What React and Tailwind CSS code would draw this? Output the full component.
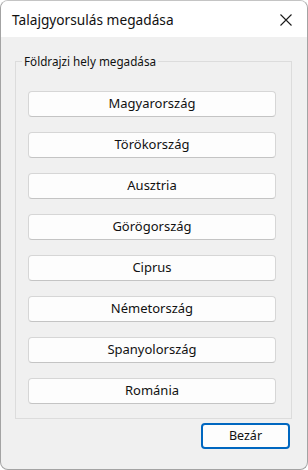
import React from "react";

const countries = [
  "Magyarország",
  "Törökország",
  "Ausztria",
  "Görögország",
  "Ciprus",
  "Németország",
  "Spanyolország",
  "Románia",
];

export default function App() {
  return (
    <div className="w-[308px] h-[470px] bg-white" style={{ fontFamily: '"Noto Sans", "Open Sans", sans-serif' }}>
      <div className="w-full h-full rounded-[8px] border border-[#a3a3a3] border-t-[#c4c4c4] bg-[#f0f0f0] overflow-hidden flex flex-col">
        <div className="h-[36px] bg-white flex items-center justify-between pl-[11px] pr-[15px] shrink-0">
          <span className="text-[13.7px] text-[#111] leading-none mt-[2px]">Talajgyorsulás megadása</span>
          <svg width="12" height="12" viewBox="0 0 12 12" className="mt-[2px]">
            <path d="M0.5 0.5 L11.5 11.5 M11.5 0.5 L0.5 11.5" stroke="#1b1b1b" strokeWidth="1.1" />
          </svg>
        </div>
        <div className="flex-1 flex flex-col">
          <fieldset className="mt-[16px] ml-[14px] w-[277px] border border-[#dcdcdc] pb-[14px]">
            <legend className="ml-[6px] px-[2px] text-[11.7px] leading-[16px] text-[#111]">Földrajzi hely megadása</legend>
            <div className="flex flex-col gap-[15px] pt-[22px] pl-[12px]">
              {countries.map((c) => (
                <button
                  key={c}
                  className="w-[248px] h-[26px] rounded-[4px] bg-[#fdfdfd] border border-[#d6d6d6] border-b-[#c4c4c4] text-[13px] text-[#111] flex items-center justify-center"
                >
                  {c}
                </button>
              ))}
            </div>
          </fieldset>
          <div className="flex justify-end pr-[17px] pt-[4px]">
            <button className="w-[89px] h-[26px] rounded-[4px] bg-[#fdfdfd] border-2 border-[#0067c0] text-[12.5px] text-[#111] flex items-center justify-center">
              Bezár
            </button>
          </div>
        </div>
      </div>
    </div>
  );
}
